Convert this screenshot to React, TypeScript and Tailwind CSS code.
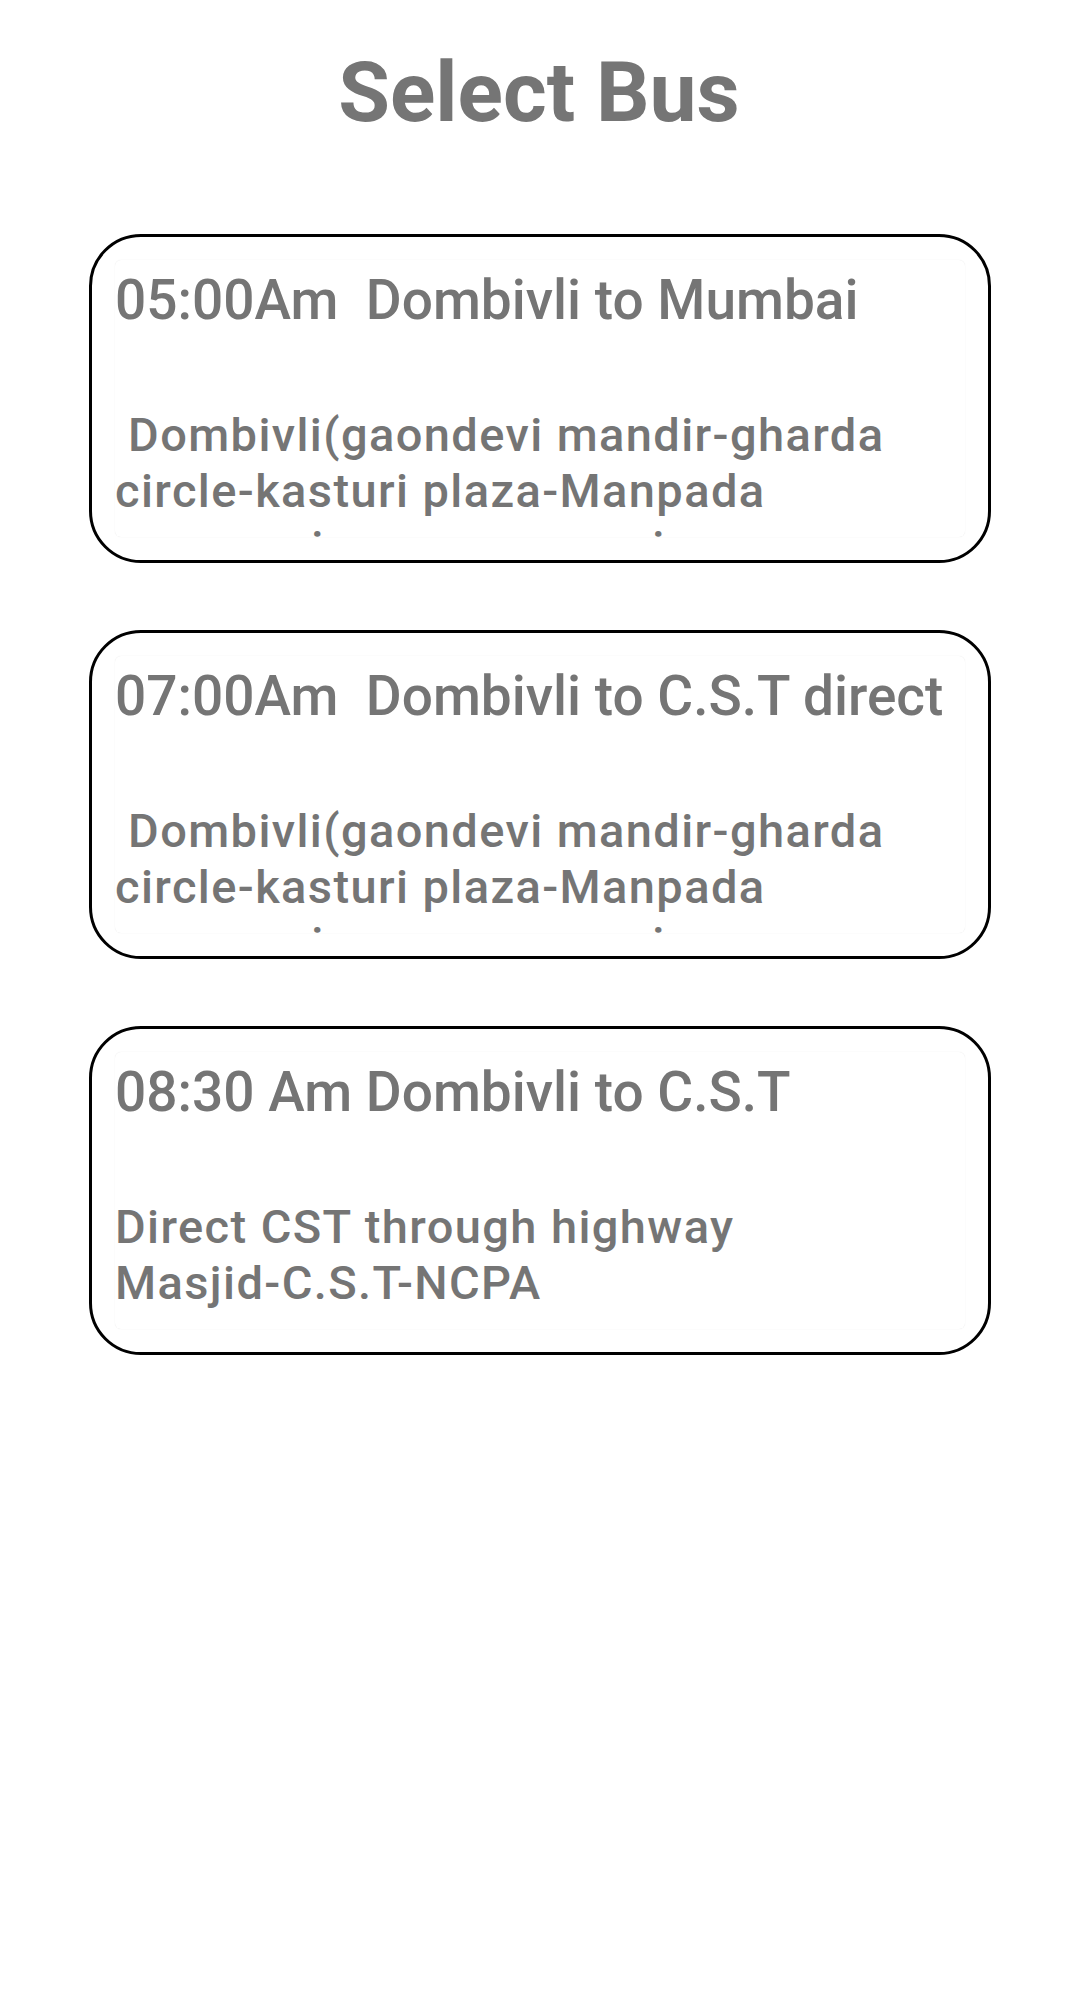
const buses = [
  {
    title: "05:00Am  Dombivli to Mumbai",
    lines: ["\u00a0Dombivli(gaondevi mandir-gharda", "circle-kasturi plaza-Manpada", "swa samir corner-sunani nagar"],
  },
  {
    title: "07:00Am  Dombivli to C.S.T direct",
    lines: ["\u00a0Dombivli(gaondevi mandir-gharda", "circle-kasturi plaza-Manpada", "swa samir corner-sunani nagar"],
  },
  {
    title: "08:30 Am Dombivli to C.S.T",
    lines: ["Direct CST through highway", "Masjid-C.S.T-NCPA"],
  },
];

function BusCard({ title, lines }: { title: string; lines: string[] }) {
  return (
    <div className="h-[329px] rounded-[52px] border-[3px] border-black p-[23px]">
      <div className="h-full overflow-hidden rounded-[6px] bg-white pt-[8px] shadow-[0_0_1px_rgba(0,0,0,0.12)]">
        <div className="whitespace-pre text-[55px] font-medium leading-[1.172]">{title}</div>
        <div className="mt-[74px] text-[47px] font-medium leading-[1.2] tracking-[1.4px]">
          {lines.map((l, i) => (
            <div key={i} className="whitespace-nowrap">{l}</div>
          ))}
        </div>
      </div>
    </div>
  );
}

export default function App() {
  return (
    <div className="min-h-[2015px] bg-white pt-[44px] text-[#757575]" style={{ fontFamily: "Roboto, 'Noto Sans', sans-serif" }}>
      <h1 className="text-center text-[84px] font-bold leading-[1.172]">Select Bus</h1>
      <div className="mt-[92px] flex flex-col gap-[67px] pl-[89px] pr-[87px]">
        {buses.map((b) => (
          <BusCard key={b.title} title={b.title} lines={b.lines} />
        ))}
      </div>
    </div>
  );
}
